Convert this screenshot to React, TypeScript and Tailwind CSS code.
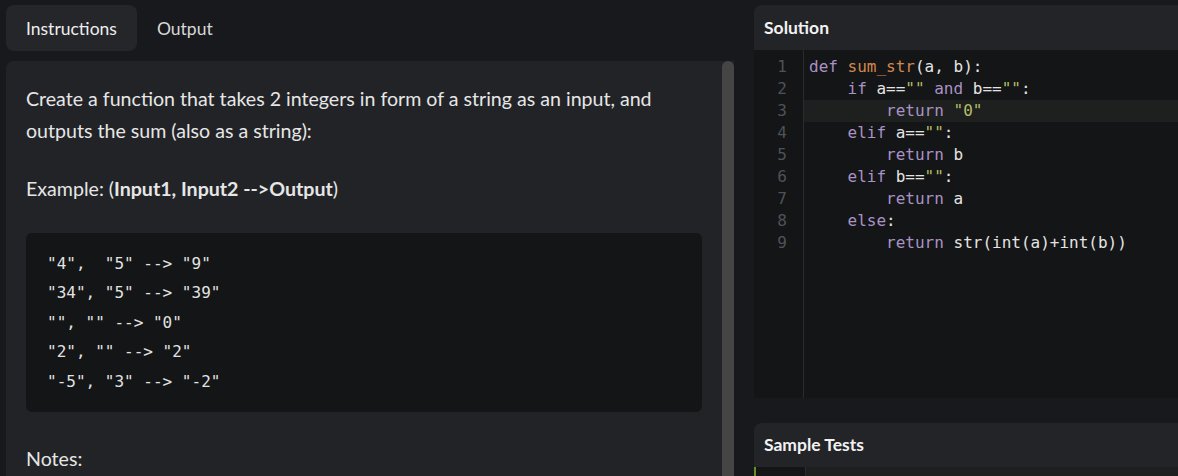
import React from 'react'

const KW = 'text-[#a892c6]'
const FN = 'text-[#d3874f]'
const STR = 'text-[#b5bd68]'

type Tok = [string, string?]

const SOLUTION: Tok[][] = [
  [['def', KW], [' '], ['sum_str', FN], ['(a, b):']],
  [['    '], ['if', KW], [' a=='], ['""', STR], [' '], ['and', KW], [' b=='], ['""', STR], [':']],
  [['        '], ['return', KW], [' '], ['"0"', STR]],
  [['    '], ['elif', KW], [' a=='], ['""', STR], [':']],
  [['        '], ['return', KW], [' b']],
  [['    '], ['elif', KW], [' b=='], ['""', STR], [':']],
  [['        '], ['return', KW], [' a']],
  [['    '], ['else', KW], [':']],
  [['        '], ['return', KW], [' str(int(a)+int(b))']],
]

const EXAMPLES = [
  '"4",  "5" --> "9"',
  '"34", "5" --> "39"',
  '"", "" --> "0"',
  '"2", "" --> "2"',
  '"-5", "3" --> "-2"',
]

const mono = { fontFamily: '"DejaVu Sans Mono", "Liberation Mono", monospace' }

export default function App() {
  return (
    <div
      className="flex h-[476px] w-full overflow-hidden bg-[#18191c] text-[#e6e6e6]"
      style={{ fontFamily: 'Lato, "Noto Sans", sans-serif' }}
    >
      {/* left column */}
      <div className="flex w-[734px] shrink-0 flex-col pl-[6px]">
        <div className="flex h-[61px] shrink-0 items-start pt-[5px] text-[17.5px]">
          <button className="flex h-[46px] items-center rounded-lg bg-[#25262a] px-5 pt-[2px] text-[#eeeeee]">Instructions</button>
          <button className="flex h-[46px] items-center px-5 pt-[2px] text-[#d8d8d8]">Output</button>
        </div>
        <div className="flex min-h-0 flex-1 rounded-tl-lg bg-[#222327]">
          <div className="min-w-0 flex-1 pl-5 pr-5 pt-[22px] text-[19.6px] leading-[32px]">
            <p>
              Create a function that takes 2 integers in form of a string as an input, and outputs the sum (also as a
              string):
            </p>
            <p className="mt-[26px]">
              Example: (<b className="font-bold">Input1, Input2 --&gt;Output</b>)
            </p>
            <pre
              className="mt-[28px] rounded-md bg-[#141516] py-4 pl-[21px] text-[16px] leading-[29.4px] text-[#e2e2e2]"
              style={mono}
            >
              {EXAMPLES.join('\n')}
            </pre>
            <p className="mt-[31px]">Notes:</p>
          </div>
          <div className="w-[12px] shrink-0 rounded-t-full bg-[#454545]" />
        </div>
      </div>

      {/* right column */}
      <div className="ml-[20px] flex min-w-0 flex-1 flex-col pt-[5px]">
        <div className="flex h-[45px] shrink-0 items-center rounded-tl-lg bg-[#232428] px-[10px] pt-[1px] text-[17.5px] font-bold text-[#f2f2f2]">
          Solution
        </div>
        <div className="flex h-[348px] shrink-0 bg-[#141516] text-[16px] leading-[22px]" style={mono}>
          <div className="w-[50px] shrink-0 border-r border-[#2a2b2c] pr-4 pt-[6px] text-right text-[#4f5257]">
            {SOLUTION.map((_, i) => (
              <div key={i}>{i + 1}</div>
            ))}
          </div>
          <div className="min-w-0 flex-1 pt-[6px]">
            {SOLUTION.map((line, i) => (
              <div key={i} className={`whitespace-pre pl-[5px] ${i === 2 ? 'bg-[#1e201f]' : ''}`}>
                {line.map(([t, c], j) => (
                  <span key={j} className={c ?? 'text-[#e4e4e4]'}>
                    {t}
                  </span>
                ))}
              </div>
            ))}
          </div>
        </div>
        <div className="mt-[25px] flex h-[44px] shrink-0 items-center rounded-tl-lg bg-[#232428] px-[10px] pt-[1px] text-[17.5px] font-bold text-[#f2f2f2]">
          Sample Tests
        </div>
        <div className="flex flex-1 border-l-2 border-[#6b8e23] bg-[#141516]">
          <div className="w-[50px] shrink-0 border-r border-[#2a2b2c]" />
          <div className="h-[11px] flex-1 bg-[#1e201f]" />
        </div>
      </div>
    </div>
  )
}
